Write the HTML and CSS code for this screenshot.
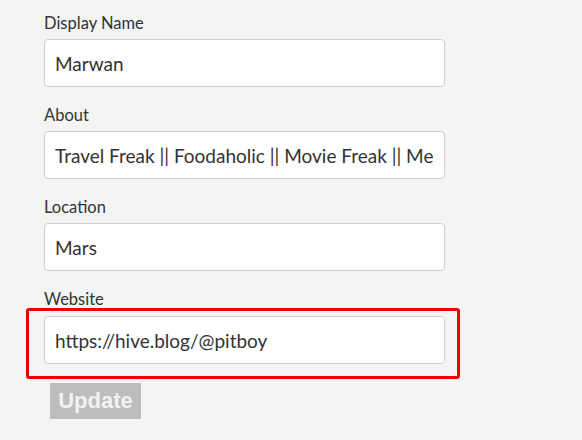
FILE: index.html
```html
<!DOCTYPE html>
<html>
<head>
<meta charset="utf-8">
<link rel="stylesheet" href="styles.css">
</head>
<body>
<form class="form">
  <div class="field">
    <label class="label">Display Name</label>
    <input class="input" type="text" value="Marwan">
  </div>
  <div class="field">
    <label class="label">About</label>
    <input class="input" type="text" value="Travel Freak || Foodaholic || Movie Freak || Mentor || Traveller">
  </div>
  <div class="field">
    <label class="label">Location</label>
    <input class="input" type="text" value="Mars">
  </div>
  <div class="field field-last">
    <label class="label label-last">Website</label>
    <div class="highlight-wrap">
      <input class="input" type="text" value="https://hive.blog/@pitboy">
      <div class="highlight"></div>
    </div>
  </div>
  <button class="button" type="button">Update</button>
</form>
</body>
</html>
```
FILE: styles.css
```css
html, body {
  margin: 0;
  padding: 0;
  background: #f4f4f4;
}
body {
  width: 582px;
  height: 440px;
  overflow: hidden;
  font-family: Lato, "Open Sans", sans-serif;
  color: #333;
}
.form {
  padding: 11px 0 0 44px;
  width: 401px;
}
.field {
  display: flex;
  flex-direction: column;
  margin-bottom: 16px;
}
.field-last {
  margin-bottom: 0;
}
.label {
  font-size: 16.5px;
  line-height: 24px;
  margin-bottom: 4px;
  color: #333;
}
.label-last {
  margin-bottom: 5px;
}
.input {
  box-sizing: border-box;
  width: 401px;
  height: 48px;
  margin: 0;
  padding: 0 10px;
  border: 1px solid #cfcfcf;
  border-radius: 4px;
  background: #fff;
  font-family: Lato, "Open Sans", sans-serif;
  font-size: 19px;
  color: #333;
  outline: none;
}
.highlight-wrap {
  position: relative;
}
.highlight {
  position: absolute;
  left: -18px;
  top: -8px;
  width: 428px;
  height: 65px;
  border: 3px solid #ee0000;
  border-radius: 3px;
  pointer-events: none;
}
.button {
  display: block;
  margin: 19px 0 0 6px;
  width: 91px;
  height: 36px;
  padding: 0;
  border: none;
  background: #bdbdbd;
  color: #f2f2f2;
  font-family: "Liberation Sans", Arial, sans-serif;
  font-weight: bold;
  font-size: 22px;
}
```
